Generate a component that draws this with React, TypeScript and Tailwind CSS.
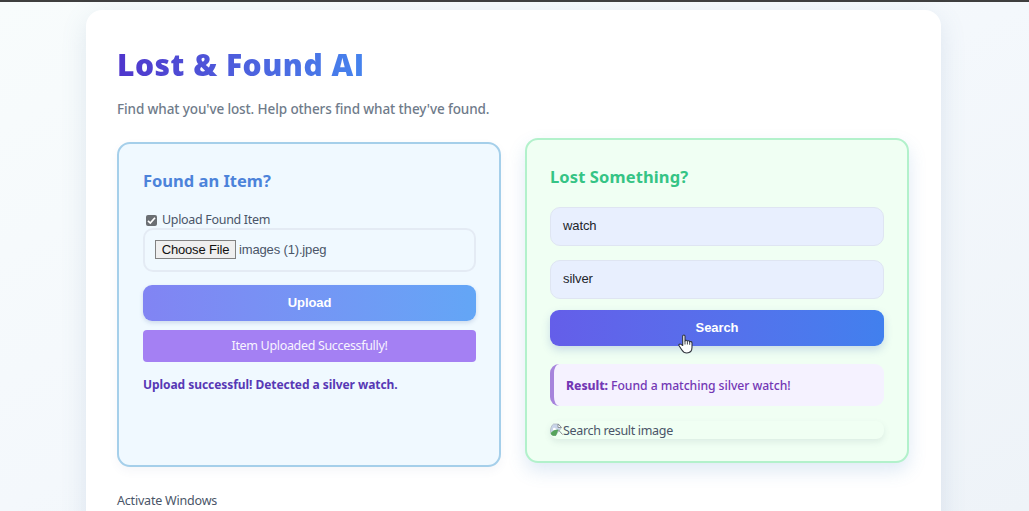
import type { ReactNode } from "react";

function Check() {
  return (
    <span className="flex h-[11px] w-[11px] items-center justify-center rounded-[2px] bg-[#6b6f73]">
      <svg width="9" height="9" viewBox="0 0 9 9" fill="none" stroke="#fff" strokeWidth="1.7">
        <path d="M1 4.8 3.3 7 8 1.8" />
      </svg>
    </span>
  );
}

function BrokenImage() {
  return (
    <svg className="-mt-[3px] h-[14px] w-[13px] shrink-0" viewBox="0 0 13 14">
      <path d="M3.500 1h5l3 3.500L5.500 12.500H3C1.200 11.500.5 10 .5 8c0-3 1-5.500 3-7Z" fill="#c9d5ea" stroke="#b0b8c0" strokeWidth=".8" />
      <path d="M8 1v3.500h3.500Z" fill="#fff" stroke="#858d92" strokeWidth=".9" />
      <path d="M3 6c0-1.500 2-1.800 2.500-.6C7 5.300 7 7 6 7H3Z" fill="#fff" />
      <path d="M.7 10C3 7.500 5 6.500 8.500 6.500L6 12.800H3C1.500 12 .9 11.500.7 10Z" fill="#55a35b" />
      <path d="M6.500 12.800 9 8.500l3.500 4.300Z" fill="#f0fff4" />
      <path d="m8.500 7 4 4.500" stroke="#858d92" strokeWidth="1" />
    </svg>
  );
}

function HandCursor() {
  return (
    <svg className="absolute left-[128px] top-[24px] h-[20px] w-[16px]" viewBox="0 0 16 20">
      <path
        d="M4.700 11.500V2.300c0-1.700 2.300-1.700 2.300 0V7c.4-1 2.200-.9 2.400.3.600-.9 2.100-.6 2.300.6.800-.8 2.300-.3 2.300 1.100v4.300c0 3.600-1.900 5.700-5.200 5.700-2.600 0-3.800-1.100-5.100-3.300L1.100 11.800c-.8-1.400.8-2.400 1.900-1.400Z"
        fill="#fff"
        stroke="#30343c"
        strokeWidth="1.100"
        strokeLinejoin="round"
      />
      <path d="M7 7v3.500M9.400 7.500v3M11.700 8v2.800" stroke="#30343c" strokeWidth=".9" />
    </svg>
  );
}

function Field({ children }: { children: ReactNode }) {
  return (
    <div className="flex h-[39px] items-center rounded-[10px] border border-[#dfe5f2] bg-[#e8effe] px-3 pb-px font-['Liberation_Sans',sans-serif] text-[13px] tracking-[-0.1px] text-[#22252b]">
      {children}
    </div>
  );
}

export default function App() {
  return (
    <div className="flex h-[511px] flex-col overflow-hidden bg-linear-to-br from-[#f8fcfc] via-[#f4f8fc] to-[#eef3f8] font-['Noto_Sans',sans-serif] text-[#4a5568]">
      <div className="h-[2px] shrink-0 bg-[#3f3f3f]" />
      <main className="ml-[86px] mt-2 h-[560px] w-[855px] shrink-0 rounded-[16px] bg-white px-[31px] shadow-[0_8px_26px_rgba(100,130,170,0.16)]">
        <h1 className="w-fit whitespace-nowrap bg-linear-to-r from-[#4f35cc] to-[#4584ee] bg-clip-text pt-[34px] font-['Open_Sans',sans-serif] text-[30px] font-extrabold leading-[42px] tracking-[0.5px] text-transparent">
          Lost &amp; Found AI
        </h1>
        <p className="mt-[13px] whitespace-nowrap text-[13.500px] font-medium leading-5 tracking-[-0.11px] text-[#6f7b8a]">
          Find what you've lost. Help others find what they've found.
        </p>

        <div className="mt-[10px] flex gap-6">
          <section className="mt-[13px] h-[325px] w-[384px] shrink-0 rounded-[13px] border-2 border-[#a5cfea] bg-[#f0f9ff] pl-[24px] pr-[23px] pt-[23px] shadow-[0_4px_10px_rgba(80,110,150,0.06)]">
            <h2 className="whitespace-nowrap text-[16.500px] font-bold leading-7 text-[#4c83da]">Found an Item?</h2>
            <label className="mt-[16px] flex h-[19px] items-center gap-[5px] whitespace-nowrap pl-[3px] text-[12.500px] tracking-[-0.32px]">
              <Check />
              Upload Found Item
            </label>
            <div className="-mt-[2px] flex h-[44px] items-center gap-[3px] rounded-[10px] border-2 border-[#e4ebf4] px-[10px] pb-px font-['Liberation_Sans',sans-serif] text-[13px] tracking-[-0.15px]">
              <span className="flex h-[19px] w-[81px] items-center justify-center whitespace-nowrap border border-[#818181] bg-[#efefef] text-[#111]">
                Choose File
              </span>
              <span>images (1).jpeg</span>
            </div>
            <button className="mt-[13px] flex h-[36px] w-full items-center justify-center rounded-[9px] bg-linear-to-r from-[#8184f3] to-[#63a6f6] font-['Liberation_Sans',sans-serif] text-[13px] font-bold tracking-[-0.1px] text-white shadow-[0_2px_4px_rgba(70,100,160,0.2)]">
              Upload
            </button>
            <div className="mt-[9px] flex h-[32px] items-center justify-center whitespace-nowrap rounded-[4px] bg-[#a480f3] pt-px text-[12.500px] tracking-[-0.33px] text-[#f8f4ff]">
              Item Uploaded Successfully!
            </div>
            <p className="mt-[13px] whitespace-nowrap text-[12px] font-bold leading-5 tracking-[-0.06px] text-[#5738b5]">
              Upload successful! Detected a silver watch.
            </p>
          </section>

          <section className="mt-[9px] h-[325px] w-[384px] shrink-0 rounded-[13px] border-2 border-[#b2f1cb] bg-[#f0fff3] px-[23px] pt-[23px] shadow-[0_8px_18px_rgba(80,140,200,0.18)]">
            <h2 className="whitespace-nowrap text-[16.500px] font-bold leading-7 tracking-[0.12px] text-[#35c485]">Lost Something?</h2>
            <div className="mt-4 flex flex-col gap-[14px]">
              <Field>watch</Field>
              <Field>silver</Field>
            </div>
            <button className="relative mt-[11px] flex h-[36px] w-full items-center justify-center rounded-[9px] bg-linear-to-r from-[#645ee9] to-[#4180ee] font-['Liberation_Sans',sans-serif] text-[13px] font-bold tracking-[-0.1px] text-white shadow-[0_4px_8px_rgba(70,100,180,0.22)]">
              Search
              <HandCursor />
            </button>
            <div className="mt-[18px] flex h-[42px] items-center whitespace-nowrap rounded-[9px] border-l-[4px] border-[#a684dc] bg-[#f5f2ff] pl-3 pt-[2px] text-[12.200px] font-medium tracking-[-0.06px] text-[#7338b5]">
              <span><b className="font-extrabold">Result:</b> Found a matching silver watch!</span>
            </div>
            <div className="mt-[15px] flex h-[18px] items-center whitespace-nowrap rounded-[8px] pt-[2px] text-[12.500px] tracking-[-0.33px] shadow-[0_3px_6px_rgba(80,110,120,0.12)]">
              <BrokenImage />
              <span>Search result image</span>
            </div>
          </section>
        </div>
        <p className="mt-[24px] whitespace-nowrap text-[12.500px] leading-5 tracking-[-0.2px]">Activate Windows</p>
      </main>
    </div>
  );
}
